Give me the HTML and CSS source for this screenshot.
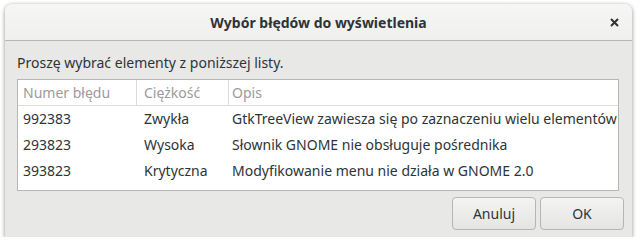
FILE: index.html
```html
<!DOCTYPE html>
<html>
<head>
    <title>Wybór błędów do wyświetlenia</title>
    <link rel="stylesheet" href="styles.css">
</head>
<body>
    <div class="dialog">
        <div class="titlebar">
            <span class="title">Wybór błędów do wyświetlenia</span>
            <span class="close">
                <svg width="9" height="9" viewBox="0 0 9 9">
                    <path d="M1 1 L8 8 M8 1 L1 8" stroke="#2e3436" stroke-width="2"/>
                </svg>
            </span>
        </div>
        <div class="content">
            <p class="prompt">Proszę wybrać elementy z poniższej listy.</p>
            <div class="list">
                <div class="row head">
                    <div class="cell c1">Numer błędu</div>
                    <div class="cell c2">Ciężkość</div>
                    <div class="cell c3">Opis</div>
                </div>
                <div class="row">
                    <div class="cell c1">992383</div>
                    <div class="cell c2">Zwykła</div>
                    <div class="cell c3">GtkTreeView zawiesza się po zaznaczeniu wielu elementów</div>
                </div>
                <div class="row">
                    <div class="cell c1">293823</div>
                    <div class="cell c2">Wysoka</div>
                    <div class="cell c3">Słownik GNOME nie obsługuje pośrednika</div>
                </div>
                <div class="row">
                    <div class="cell c1">393823</div>
                    <div class="cell c2">Krytyczna</div>
                    <div class="cell c3">Modyfikowanie menu nie działa w GNOME 2.0</div>
                </div>
            </div>
        </div>
        <div class="actions">
            <button class="btn">Anuluj</button>
            <button class="btn">OK</button>
        </div>
    </div>
</body>
</html>
```

FILE: styles.css
```css
body {
    margin: 0;
    background-color: #ffffff;
    font-family: "Noto Sans", sans-serif;
    font-size: 14px;
    color: #2e3436;
}

.dialog {
    margin: 4px 0 0 5px;
    width: 627px;
    height: 233px;
    background-color: #e8e8e7;
    border-radius: 7px 7px 0 0;
    box-shadow: 0 1px 4px rgba(0, 0, 0, 0.45);
    display: flex;
    flex-direction: column;
}

.titlebar {
    height: 36px;
    border-bottom: 1px solid #b6b6b3;
    border-radius: 7px 7px 0 0;
    background: linear-gradient(#f6f6f5, #efefee);
    display: flex;
    align-items: center;
    justify-content: center;
    position: relative;
}
.title {
    font-weight: bold;
}
.close {
    position: absolute;
    right: 13px;
    top: 14px;
    display: flex;
}

.content {
    padding: 0 13px 0 12px;
}
.prompt {
    margin: 12px 0 0 0;
    line-height: 20px;
    height: 26px;
}
.list {
    background-color: #ffffff;
    border: 1px solid #b6b6b3;
    height: 110px;
}
.row {
    display: flex;
    height: 26px;
    line-height: 26px;
}
.row.head {
    height: 25px;
    line-height: 25px;
    border-bottom: 1px solid #dcdcda;
    color: #999b9b;
}
.cell {
    white-space: nowrap;
    border-left: 1px solid transparent;
}
.head .c2,
.head .c3 {
    border-left-color: #dcdcda;
}
.c1 {
    width: 118px;
    padding-left: 5px;
    box-sizing: border-box;
    border-left: none;
}
.c2 {
    width: 92px;
    padding-left: 7px;
    box-sizing: border-box;
}
.c3 {
    padding-left: 3px;
}

.actions {
    display: flex;
    justify-content: flex-end;
    gap: 4px;
    padding: 6px 8px 0 0;
}
.btn {
    width: 84px;
    height: 33px;
    font-family: "Noto Sans", sans-serif;
    font-size: 14px;
    color: #2e3436;
    background: linear-gradient(#f4f4f3, #e4e4e2);
    border: 1px solid #b6b6b3;
    border-radius: 4px;
}
```
